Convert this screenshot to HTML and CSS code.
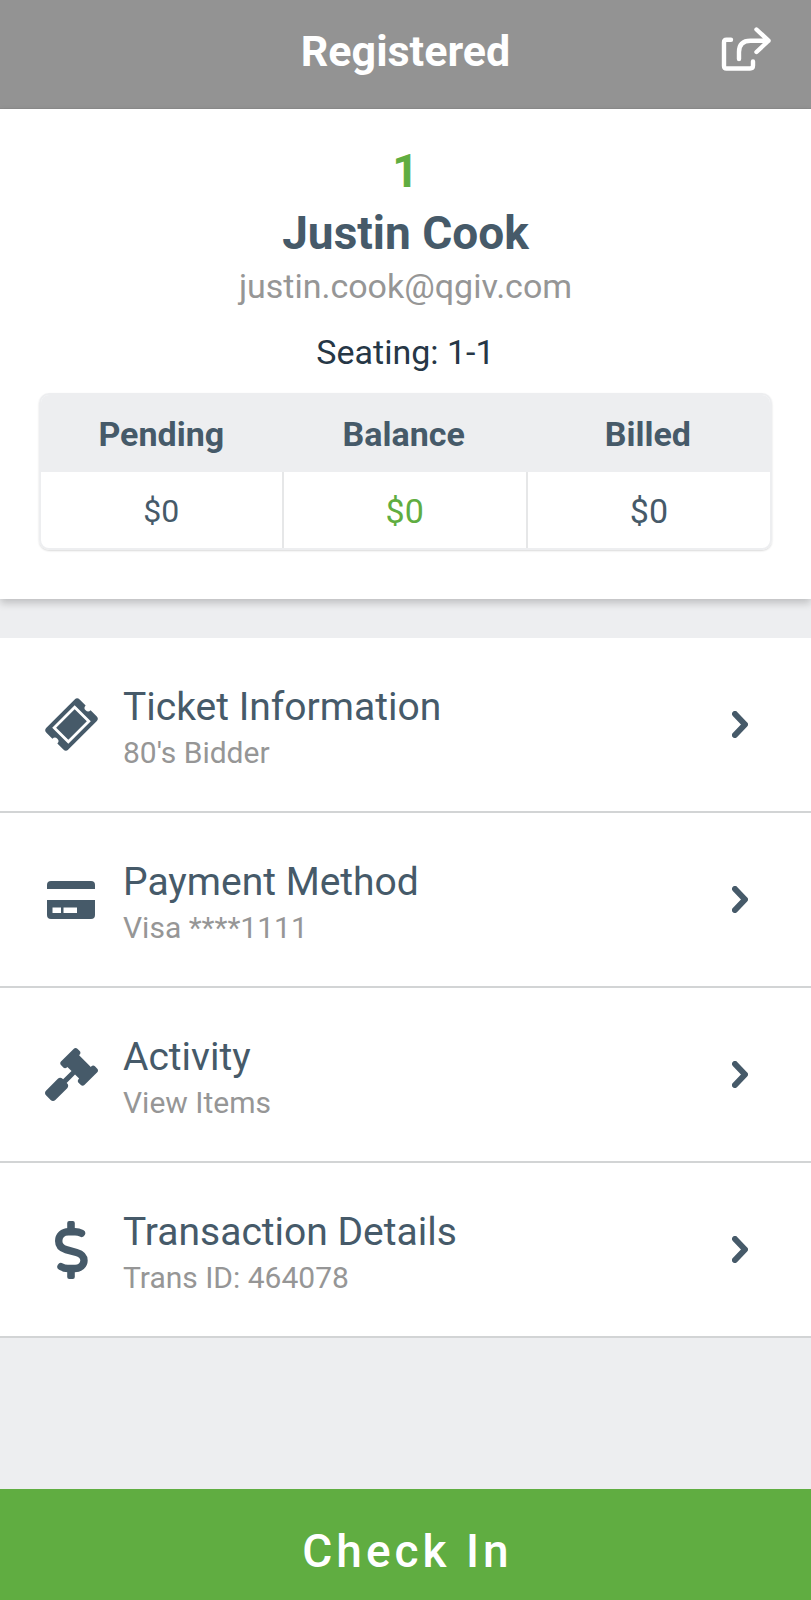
FILE: index.html
```html
<!DOCTYPE html>
<html lang="en">
<head>
    <meta charset="UTF-8">
    <meta name="viewport" content="width=device-width, initial-scale=1.0">
    <title>Registered</title>
    <link rel="stylesheet" href="styles.css">
</head>
<body>
    <header class="topbar">
        <h1>Registered</h1>
        <button type="button" class="share" aria-label="Share">
            <svg viewBox="0 0 49 44" width="49" height="44" fill="none" stroke="currentColor" stroke-width="4.400" stroke-linecap="round" stroke-linejoin="round">
                <path d="M9 12.800H4.500Q2 12.800 2 15.300V39Q2 41.500 4.500 41.500H28Q31 41.500 31 38.500V34.500"/>
                <path d="M17 32V25Q17 13.700 28.500 13.700H46.500M34.500 2.500L46.500 13.700L34.500 25"/>
            </svg>
        </button>
    </header>

    <section class="guest">
        <p class="guest-number">1</p>
        <h2 class="guest-name">Justin Cook</h2>
        <p class="guest-email">justin.cook@qgiv.com</p>
        <p class="guest-seating">Seating: 1-1</p>

        <table class="totals">
            <thead>
                <tr>
                    <th class="first">Pending</th>
                    <th>Balance</th>
                    <th>Billed</th>
                </tr>
            </thead>
            <tbody>
                <tr>
                    <td class="pending">$0</td>
                    <td class="balance">$0</td>
                    <td>$0</td>
                </tr>
            </tbody>
        </table>
    </section>

    <nav class="menu">
        <a href="#ticket" class="row">
            <span class="icon">
                <svg viewBox="0 0 53 53" width="53" height="53">
                    <g transform="translate(26.5 26.5) rotate(-45)">
                        <path fill="currentColor" d="M-20-15.500H20A3.500 3.500 0 0 1 23.500-12V-3.500A3.500 3.500 0 0 0 23.500 3.500V12A3.500 3.500 0 0 1 20 15.500H-20A3.500 3.500 0 0 1-23.500 12V3.500A3.500 3.500 0 0 0-23.500-3.500V-12A3.500 3.500 0 0 1-20-15.500Z"/>
                        <rect x="-14.500" y="-10" width="29" height="20" fill="none" stroke="#fff" stroke-width="2.800"/>
                    </g>
                </svg>
            </span>
            <span class="text">
                <span class="title">Ticket Information</span>
                <span class="sub">80's Bidder</span>
            </span>
            <svg class="chevron" viewBox="0 0 16 27" width="16" height="27"><path d="M3 3L13 13.500L3 24"/></svg>
        </a>
        <a href="#payment" class="row">
            <span class="icon">
                <svg viewBox="0 0 48 38" width="48" height="38" fill="currentColor">
                    <path d="M0 8V4Q0 0 4 0H44Q48 0 48 4V8Z"/>
                    <path fill-rule="evenodd" d="M0 19H48V34Q48 38 44 38H4Q0 38 0 34ZM5.500 26.500V32H14V26.500ZM16.500 26.500V32H30V26.500Z"/>
                </svg>
            </span>
            <span class="text">
                <span class="title">Payment Method</span>
                <span class="sub">Visa ****1111</span>
            </span>
            <svg class="chevron" viewBox="0 0 16 27" width="16" height="27"><path d="M3 3L13 13.500L3 24"/></svg>
        </a>
        <a href="#activity" class="row">
            <span class="icon">
                <svg viewBox="0 0 512 512" width="53" height="53" fill="currentColor">
                    <path d="M504.971 199.362l-22.627-22.627c-9.373-9.373-24.569-9.373-33.941 0l-5.657 5.657L329.608 69.255l5.657-5.657c9.373-9.373 9.373-24.569 0-33.941L312.638 7.029c-9.373-9.373-24.569-9.373-33.941 0L154.246 131.480c-9.373 9.373-9.373 24.569 0 33.941l22.627 22.627c9.373 9.373 24.569 9.373 33.941 0l5.657-5.657 39.598 39.598-81.040 81.040-5.657-5.657c-12.497-12.497-32.758-12.497-45.255 0L9.373 412.118c-12.497 12.497-12.497 32.758 0 45.255l45.255 45.255c12.497 12.497 32.758 12.497 45.255 0l114.745-114.745c12.497-12.497 12.497-32.758 0-45.255l-5.657-5.657 81.040-81.040 39.598 39.598-5.657 5.657c-9.373 9.373-9.373 24.569 0 33.941l22.627 22.627c9.373 9.373 24.569 9.373 33.941 0l124.451-124.451c9.372-9.372 9.372-24.568 0-33.941z"/>
                </svg>
            </span>
            <span class="text">
                <span class="title">Activity</span>
                <span class="sub">View Items</span>
            </span>
            <svg class="chevron" viewBox="0 0 16 27" width="16" height="27"><path d="M3 3L13 13.500L3 24"/></svg>
        </a>
        <a href="#transaction" class="row">
            <span class="icon">
                <svg viewBox="0 0 33 58" width="33" height="58">
                    <path fill="none" stroke="currentColor" stroke-width="7.400" stroke-linejoin="round" stroke-linecap="round" d="M26.500 12.300Q23.500 10.700 20 10.700H13.500C8 10.700 3.700 14.500 3.700 20C3.700 24.500 6.500 27.300 11 28.600L21.500 31.500C26 32.800 29 35.500 29 39.500C29 44 25 47.500 20 47.500H13Q9 47.500 6 45.700"/>
                    <rect x="12.200" y="0" width="7.600" height="11" rx="2" fill="currentColor"/>
                    <rect x="12.200" y="47" width="7.600" height="11" rx="2" fill="currentColor"/>
                </svg>
            </span>
            <span class="text">
                <span class="title">Transaction Details</span>
                <span class="sub">Trans ID: 464078</span>
            </span>
            <svg class="chevron" viewBox="0 0 16 27" width="16" height="27"><path d="M3 3L13 13.500L3 24"/></svg>
        </a>
    </nav>

    <button type="button" class="check-in">Check In</button>
</body>
</html>
```

FILE: styles.css
```css
* {
    box-sizing: border-box;
}
body {
    font-family: Roboto, sans-serif;
    background-color: #edeef0;
    color: #465a69;
    margin: 0;
    min-height: 100vh;
    display: flex;
    flex-direction: column;
}
h1, h2, p {
    margin: 0;
}
button {
    font-family: inherit;
    border: none;
    cursor: pointer;
}
svg {
    display: block;
}

/* Top bar */
.topbar {
    display: grid;
    grid-template-columns: 1fr auto 1fr;
    align-items: center;
    padding: 0 40px 8px;
    height: 109px;
    background-color: #939393;
    border-bottom: 1px solid #8c8c8c;
    color: white;
}
.topbar h1 {
    grid-column: 2;
    padding-top: 2px;
    font-size: 43px;
    line-height: 56px;
    font-weight: bold;
}
.share {
    justify-self: end;
    padding: 0 0 2px;
    background: none;
    color: white;
}
.share svg {
    overflow: visible;
}

/* Guest summary */
.guest {
    background: white;
    padding: 34px 39px 49px;
    text-align: center;
    box-shadow: 0 4px 8px rgba(0, 0, 0, 0.2);
}
.guest-number, .guest-name {
    font-size: 46px;
    line-height: 56px;
    font-weight: bold;
}
.guest-number {
    color: #60ad41;
}
.guest-name {
    margin-top: 6px;
}
.guest-email, .guest-seating {
    font-size: 34px;
    line-height: 42px;
}
.guest-email {
    margin-top: 4px;
    color: #969696;
}
.guest-seating {
    margin-top: 24px;
    color: #263746;
}
.totals {
    width: 100%;
    margin-top: 20px;
    table-layout: fixed;
    border: 2px solid #edeef0;
    border-radius: 10px;
    border-spacing: 0;
    box-shadow: 0 1px 2px rgba(0, 0, 0, 0.15);
    overflow: hidden;
    font-size: 34px;
    line-height: 42px;
}
.totals th {
    padding: 18px 0 17px;
    background-color: #edeef0;
}
.totals .first {
    width: 33%;
}
.totals td {
    padding: 18px 0 16px;
}
.totals td + td {
    border-left: 2px solid #e6e7e8;
}
.totals .pending {
    font-size: 32px;
}
.totals .balance {
    color: #60ad41;
}

/* Menu rows */
.menu {
    margin-top: 39px;
    margin-bottom: auto;
}
.row {
    display: flex;
    align-items: center;
    padding: 40px 63px 40px 44px;
    background: white;
    border-bottom: 2px solid #d2d4d5;
    color: inherit;
    text-decoration: none;
}
.icon {
    width: 54px;
    display: flex;
    justify-content: center;
    margin-right: 25px;
}
.text {
    flex: 1;
    display: flex;
    flex-direction: column;
    gap: 4px;
    padding-top: 5px;
}
.title {
    font-size: 39px;
    line-height: 48px;
}
.sub {
    font-size: 30px;
    line-height: 36px;
    color: #969696;
}
.chevron {
    fill: none;
    stroke: currentColor;
    stroke-width: 6;
    stroke-linecap: round;
    stroke-linejoin: round;
}

/* Bottom action */
.check-in {
    width: 100%;
    padding: 34px 0 21px;
    background-color: #60ad41;
    color: white;
    font-size: 46px;
    line-height: 56px;
    font-weight: 500;
    letter-spacing: 4px;
    text-indent: 4px;
}
```
